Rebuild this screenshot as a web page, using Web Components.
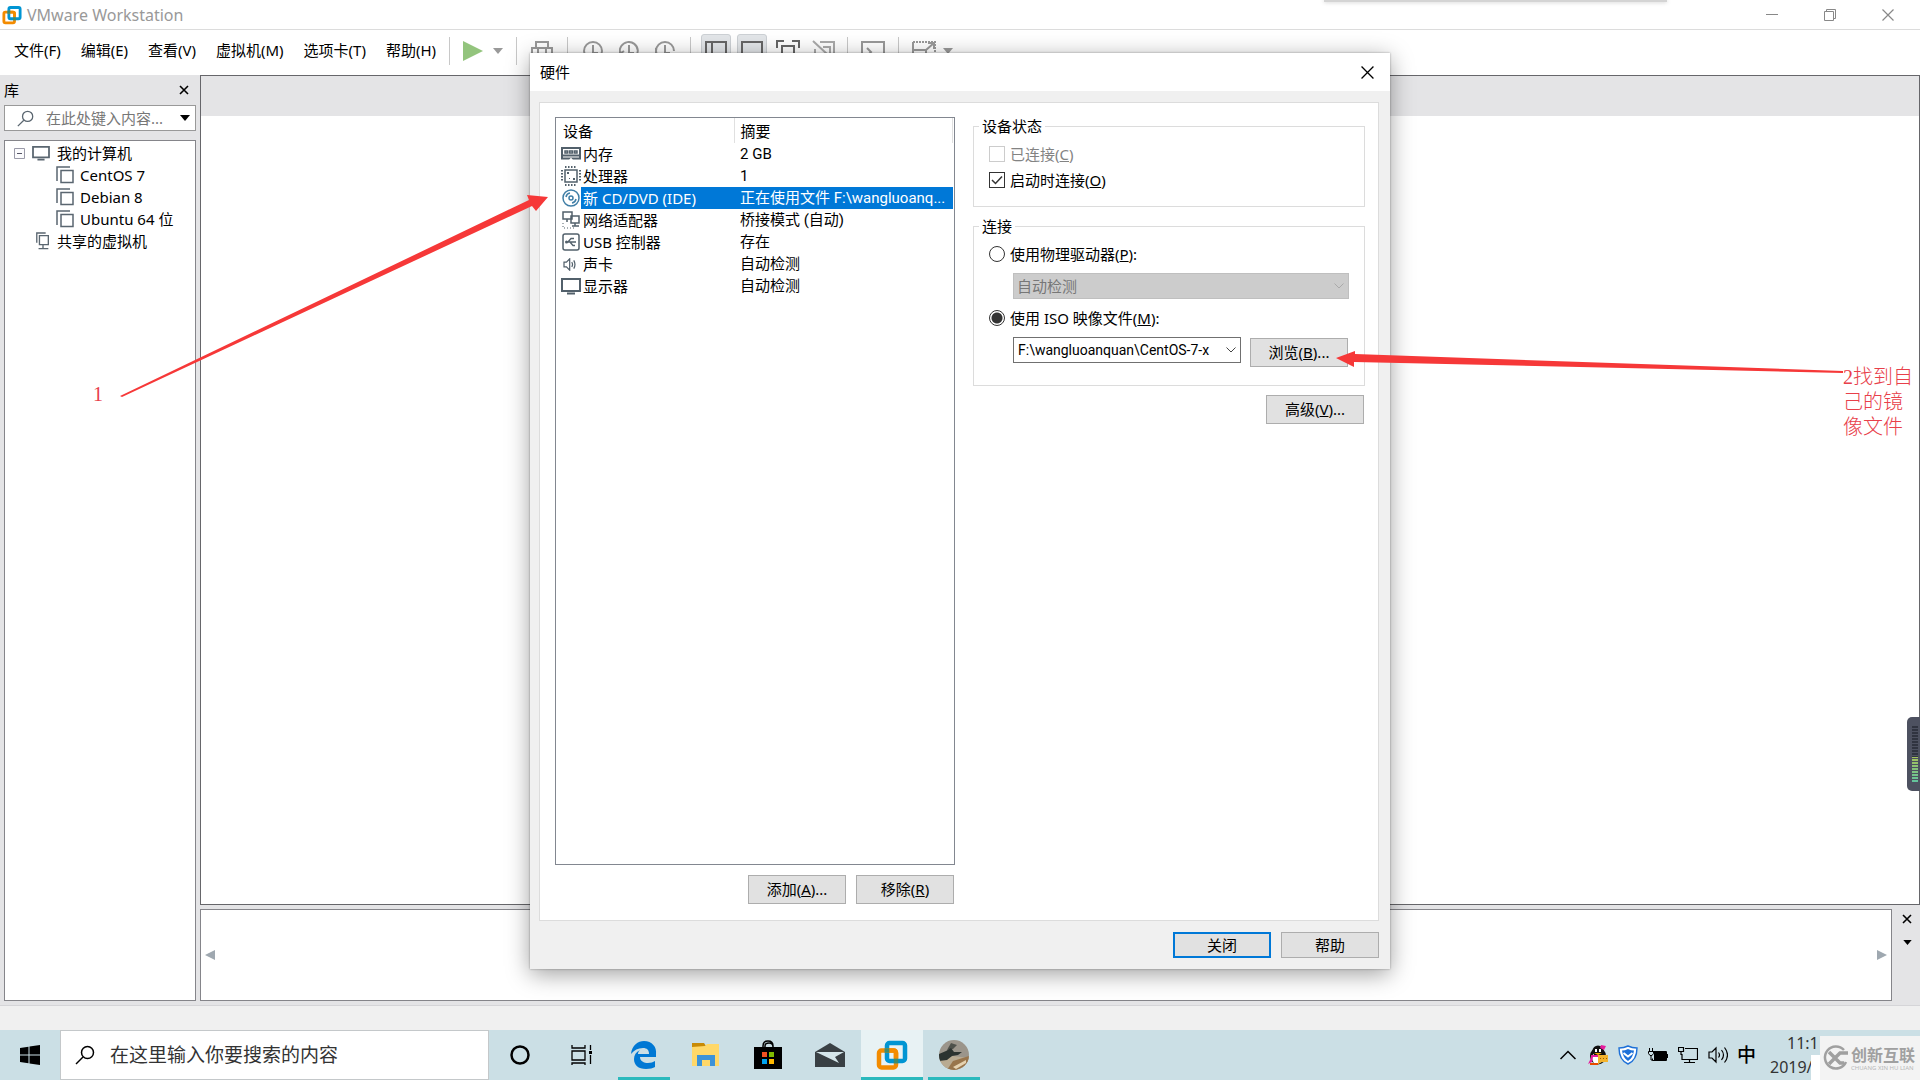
<!DOCTYPE html>
<html lang="zh-CN">
<head>
<meta charset="utf-8">
<title>VMware Workstation</title>
<style>
html,body{margin:0;height:100%;overflow:hidden}
body{font:15px/20px "Noto Sans","Noto Sans CJK SC",sans-serif;color:#000;background:#fff}
</style>
</head>
<body>
<vm-desktop></vm-desktop>
<script>
const define = (name, css, html, setup) => {
  const tpl = document.createElement('template');
  tpl.innerHTML = `<style>*{box-sizing:border-box}:host{box-sizing:border-box}button,input,select{font:inherit;color:inherit;margin:0;border-radius:0}${css}</style>${html}`;
  customElements.define(name, class extends HTMLElement {
    constructor() {
      super();
      this.attachShadow({mode: 'open'}).append(tpl.content.cloneNode(true));
    }
    connectedCallback() { if (setup) setup(this, this.shadowRoot); }
  });
};

/* name: [width, height, markup] */
const S = 'fill="none" stroke="currentColor"';
const ICONS = {
  vmware: [32, 32, `<g fill="none" stroke-width="4.500"><rect x="3" y="11.500" width="17" height="17" rx="2.500" stroke="#f38b00"/><rect x="11" y="4" width="18" height="18" rx="2.500" stroke="#0095d3"/><path d="M9 11.500h8.500q2.500 0 2.500 2.500v5.500" stroke="#f38b00"/><path d="M17.800 22h4.400" stroke="#3f8c6e"/><path d="M11 9.300v4.400" stroke="#3f8c6e"/></g>`],
  play: [20, 20, `<path d="M0 0L20 10L0 20z" fill="#93c47d"/>`],
  drop: [10, 6, `<path d="M0 0h10L5 6z" fill="currentColor"/>`],
  left: [10, 10, `<path d="M10 0v10L0 5z" fill="currentColor"/>`],
  right: [10, 10, `<path d="M0 0v10L10 5z" fill="currentColor"/>`],
  send: [22, 22, `<path ${S} stroke-width="2" d="M5 8V2h12v6M1 16V8h20v8zM7 8v6h8V8M5 16v5h12v-5"/>`],
  clock: [20, 20, `<circle ${S} stroke-width="2" cx="10" cy="10" r="9"/><path ${S} stroke-width="2" d="M10 4v8h5"/>`],
  clockback: [20, 20, `<path ${S} stroke-width="2" d="M1 12A9 9 0 1 1 10 19M10 4v8h5M0 9l2 3 3-2"/>`],
  clockcog: [20, 20, `<path ${S} stroke-width="2" d="M19 10A9 9 0 1 0 10 19M10 4v8h5M1 7l-1 6"/>`],
  pane: [22, 20, `<path ${S} stroke-width="2" d="M1 1h20v18H1zM7 1v18"/>`],
  single: [22, 20, `<path ${S} stroke-width="2" d="M1 1h20v18H1z"/>`],
  full: [24, 22, `<path ${S} stroke-width="2" d="M1 8V1h7M16 1h7v7M23 15v6h-7M8 21H1v-6M6 6h12v10H6z"/>`],
  unity: [24, 22, `<path ${S} stroke-width="2" d="M8 2h14v17H3V9M1 1l14 13M11 7h7v7"/>`],
  term: [24, 20, `<path ${S} stroke-width="2" d="M1 1h22v18H1zM6 7l4 4-4 4"/>`],
  stretch: [24, 20, `<path ${S} stroke-width="2" stroke-dasharray="2 1" d="M1 1h22v18"/><path ${S} stroke-width="2" d="M1 9h13v10H1zM1 1v8M14 9l8-7M16 2h6v6"/>`],
  search: [20, 20, `<circle ${S} stroke-width="1.500" cx="12.500" cy="7.500" r="6"/><path ${S} stroke-width="1.500" d="M8 12L1 19"/>`],
  close: [12, 12, `<path ${S} stroke-width="1.200" d="M.5.5l11 11M11.500.5l-11 11"/>`],
  closebold: [10, 10, `<path ${S} stroke-width="1.600" d="M1 1l8 8M9 1l-8 8"/>`],
  min: [12, 12, `<path ${S} d="M0 5.500h12"/>`],
  restore: [12, 12, `<path ${S} d="M.5 2.500h9v9h-9zM2.500 2.500v-2h9v9h-2"/>`],
  minus: [11, 11, `<path fill="#fbfbfd" stroke="#9a9aa8" d="M.5.5h10v10H.5z"/><path stroke="#556" d="M3 5.500h5"/>`],
  monitor: [20, 18, `<path ${S} stroke-width="2" d="M1 2h18v12H1zM6 16.500h8"/>`],
  vm: [18, 18, `<path ${S} stroke-width="1.500" d="M5 4.500h12v12H5zM1 15V1h13"/>`],
  shared: [18, 20, `<path ${S} stroke-width="1.500" d="M5 4h10v10H5zM2 12V1h10M9 14v4M4 18.500h11"/>`],
  memory: [20, 14, `<path ${S} stroke-width="2" d="M1 1h18v10.500H1zM1 8.500h18"/><path d="M4 4h2.500v2H4zM8.500 4h3v2h-3zM13.500 4H16v2h-2.500z" ${S} stroke-width="1.500"/><path fill="#fff" d="M8 13l2-2.500 2 2.500z"/>`],
  cpu: [20, 20, `<path ${S} stroke-width="1.500" d="M4 4h12v12H4z"/><path ${S} stroke-width="2" stroke-dasharray="1.500 1.500" d="M4 1h12M4 19h12M1 4v12M19 4v12"/><path fill="currentColor" d="M6 6h2v2H6zM12 12h2v2h-2zM8 12h1v1H8z"/>`],
  disc: [18, 18, `<circle cx="9" cy="9" r="8" fill="#fff" stroke="#3f7ea6" stroke-width="1.500"/><circle cx="9" cy="9" r="2" fill="none" stroke="#3f7ea6" stroke-width="1.500"/><path d="M4 8a5 5 0 0 1 4-4M14 10a5 5 0 0 1-4 4" fill="none" stroke="#3f7ea6" stroke-width="1.500"/>`],
  net: [20, 20, `<path ${S} stroke-width="1.500" d="M2 2h9v7H2zM10 6h8v7h-8zM14 13v3M11 16h7M6 9v3"/><path ${S} stroke-dasharray="1 2" d="M2 13v5h11"/>`],
  usb: [18, 18, `<rect ${S} stroke-width="1.500" x="1" y="1" width="16" height="16" rx="2"/><path ${S} stroke-width="1.300" d="M4 9h10M6 9l3-3.500h3M8 9l3 3.500h2"/><circle cx="4.500" cy="9" r="1.500" fill="currentColor"/>`],
  sound: [18, 16, `<path ${S} stroke-width="1.500" d="M1 5h3l4-4v14l-4-4H1zM10.500 5q2 3 0 6M13 3q3 5 0 10"/>`],
  check: [12, 10, `<path fill="none" stroke="#333" stroke-width="1.500" d="M1 5l3.500 3.500L11 1.500"/>`],
  chevron: [10, 6, `<path ${S} d="M.5.5L5 5 9.500.5"/>`],
  windows: [20, 20, `<path d="M0 3l8.500-1.200v7.700H0zM9.500 1.600L20 0v9.500H9.500zM0 10.500h8.500v7.700L0 17zM9.500 10.500H20V20L9.500 18.400z"/>`],
  cortana: [20, 20, `<circle cx="10" cy="10" r="8.500" fill="none" stroke="#000" stroke-width="2.500"/>`],
  tasks: [22, 20, `<path fill="none" stroke="#000" stroke-width="1.300" d="M1 0v3h13V0M1 6h13v9H1zM1 20v-2h13v2M19.500 0v5M19.500 10v9"/><path d="M18 6h3v3h-3z"/>`],
  edge: [26, 28, `<path fill="#0078d4" d="M0 13C1 4 7 0 13 0c8 0 13 6 12 13v3H9c0 4 4 6 8 6 3 0 5-1 7-2v6c-2 1-5 2-9 2C7 28 3 24 3 18c0-4 2-7 6-9-2 2-2 3-2 4h11c0-4-2-6-6-6C7 7 3 9 0 13z"/>`],
  folder: [28, 24, `<path fill="#c88a06" d="M0 0h12l2 3v4H0z"/><path fill="#ffd869" d="M0 4l13-1 2-2h12v22H0z"/><path fill="#3d93d8" d="M5 12h18v11h-5v-6h-8v6H5z"/>`],
  store: [30, 30, `<path d="M10 8V6q0-5 5-5t5 5v2M12 8V6q0-3 4-3t4 4" fill="none" stroke="#000" stroke-width="1.500"/><path d="M1 7h28v22H1z"/><path fill="#f25022" d="M9 12h5v5H9z"/><path fill="#7fba00" d="M16 12h5v5h-5z"/><path fill="#00a4ef" d="M9 19h5v5H9z"/><path fill="#ffb900" d="M16 19h5v5h-5z"/>`],
  mail: [30, 24, `<path fill="#394044" d="M0 9L15 0l15 9v15H0z"/><path fill="#d5e6ea" d="M1 9h28l-9 5 4 6L1 9z"/>`],
  photo: [30, 30, `<defs><clipPath id="c"><circle cx="15" cy="15" r="15"/></clipPath></defs><g clip-path="url(#c)"><path fill="#9b958b" d="M0 0h30v30H0z"/><path fill="#b9ab92" d="M0 30V20l14-4 16 2v12z"/><path fill="#98754c" d="M8 30l6-9 16-5v8l-12 6z"/><path fill="#4e514b" d="M12 3l6 2-4 4-6 1z"/><path fill="#2c3330" d="M0 14l7-3 5-3 3 4 8 0-4 3-6 1-5 4-8 1z"/><path fill="#e5d2b0" d="M14 27l13-7v3l-10 6z"/></g>`],
  up: [16, 10, `<path ${S} stroke-width="1.500" d="M.5 9L8 1.500 15.500 9"/>`],
  penguin: [20, 20, `<ellipse cx="10" cy="11" rx="8" ry="8.500" fill="#111"/><ellipse cx="9" cy="13" rx="5" ry="6" fill="#fff"/><circle cx="10" cy="6" r="5.500" fill="#111"/><path d="M7 4h2v3H7zM11 4h2v3h-2z" fill="#fff"/><path d="M6 8h8l-4 2z" fill="#f6a800"/><path fill="#e61b9d" d="M3 10h13v2H5l-1 5-4 2 3-6zM13 0l5 1-2 4-4-2z"/><path fill="#e84b00" d="M2 18h8v2H2z"/><path fill="#f3b32d" d="M10 10h10v7h-6l-4 2z"/><path fill="#9b5b00" d="M12 13h1v1h-1zM15 13h1v1h-1zM18 13h1v1h-1z"/>`],
  shield: [20, 20, `<path fill="#fff" stroke="#1d70d8" stroke-width="1.400" d="M10 1q4 2 9 2 0 12-9 16Q1 15 1 3q5 0 9-2z"/><path fill="#1d70d8" d="M10 4q3 1.500 6 1.500Q15 13 10 16 5 13 4 5.500 7 5.500 10 4z"/><path fill="none" stroke="#fff" stroke-width="2" d="M5.500 8l4.500 3.500L14.500 8"/>`],
  battery: [20, 14, `<path d="M6 4h12v9H6z"/><path fill="none" stroke="#000" d="M4.500 12.500v-2M5 3.500h13.500v9H4.500M19.500 6v4M1.500 0v3M4.500 0v3M.5 3.500h5v2l-1.500 2h-2L.5 5.500zM3 7v5h2"/>`],
  ethernet: [20, 18, `<path fill="none" stroke="#000" stroke-width="1.200" d="M7 2.500h12.500v11H4V8M6 16.500h11M11.500 14v3M.5 1.500h5v4h-5zM3 6v3"/>`],
  speaker: [20, 18, `<path fill="none" stroke="#000" stroke-width="1.200" d="M1 6h3l4-4v14l-4-4H1zM10.500 6.500q2 2.500 0 5M13.500 4q4 5 0 10M16.500 1.500q6 7.500 0 15"/>`],
  brand: [26, 26, `<path fill="none" stroke="#a0a0a0" stroke-width="2.500" d="M22 5A11 11 0 1 0 24 17"/><path fill="none" stroke="#a0a0a0" stroke-width="3.500" d="M7 7l6 6 5-5h8M7 19l6-6 5 5h4"/>`]
};
customElements.define('ui-icon', class extends HTMLElement {
  constructor() { super(); this.attachShadow({mode: 'open'}); }
  connectedCallback() {
    const [w, h, body] = ICONS[this.getAttribute('name')];
    const size = +this.getAttribute('width') || w;
    this.shadowRoot.innerHTML = `<style>:host{display:inline-flex;flex:none}svg{display:block}</style><svg width="${size}" height="${Math.round(h * size / w)}" viewBox="0 0 ${w} ${h}" aria-hidden="true">${body}</svg>`;
  }
});

define('ui-button', `
:host{display:block;width:98px;height:29px}
button{width:100%;height:100%;padding:0 0 2px;background:#e1e1e1;border:1px solid #adadad}
:host([short]){height:26px}
:host([short]) button{padding:0}
:host([primary]) button{border:2px solid #0078d7}`,
`<button type="button"><slot></slot></button>`);

define('ui-choice', `
:host{display:block}
label{display:flex;align-items:center;gap:5px;height:26px}
.box{display:grid;place-items:center;flex:none}
.box>*{grid-area:1/1}
input{appearance:none;width:16px;height:16px;border:1px solid #333;background:#fff}
input[type=radio]{border-radius:50%}
input[type=radio]:checked{background:radial-gradient(circle,#333 0 5px,#fff 6px)}
ui-icon{visibility:hidden;pointer-events:none}
input[type=checkbox]:checked+ui-icon{visibility:visible}
:host([disabled]) label{color:#838383}
:host([disabled]) input{border-color:#ccc}`,
`<label><span class="box"><input><ui-icon name="check"></ui-icon></span><span><slot></slot></span></label>`,
(el, root) => {
  const input = root.querySelector('input');
  input.type = el.getAttribute('type');
  input.checked = el.hasAttribute('checked');
  input.disabled = el.hasAttribute('disabled');
});

define('ui-combo', `
:host{display:grid;height:26px;align-items:center}
select,ui-icon{grid-area:1/1}
select{appearance:none;width:100%;height:100%;padding:0 20px 0 4px;border:1px solid #707070;background:#fff;line-height:20px;opacity:1}
:host([path]) select{font-family:Roboto,"Noto Sans CJK SC",sans-serif;font-size:14px}
ui-icon{justify-self:end;margin-right:5px;color:#444;pointer-events:none}
:host([disabled]) select{background:#ccc;border-color:#bfbfbf;color:#777;padding-left:3px}
:host([disabled]) ui-icon{color:#aaa}`,
`<select><option></option></select><ui-icon name="chevron"></ui-icon>`,
(el, root) => {
  const select = root.querySelector('select');
  select.setAttribute('aria-label', el.getAttribute('label'));
  select.options[0].textContent = el.getAttribute('value');
  select.disabled = el.hasAttribute('disabled');
});

define('ui-group', `
:host{display:block}
fieldset{margin:0;min-width:0;border:1px solid #dcdcdc;padding:5px 15px 13px}
legend{height:20px;padding:0 3px;margin-left:-10px}
:host([wide]) fieldset{padding-bottom:18px}`,
`<fieldset><legend></legend><slot></slot></fieldset>`,
(el, root) => { root.querySelector('legend').textContent = el.getAttribute('label'); });

define('vm-titlebar', `
:host{display:flex;align-items:center;height:30px;border-bottom:1px solid #dcdcdc;padding:0 26px 0 2px;color:#999}
h1{flex:1;margin:0 0 0 5px;font-size:16px;font-weight:400;line-height:20px}
nav{display:flex;gap:46px}
button{display:flex;border:0;background:none;padding:0;color:#888}`,
`<ui-icon name="vmware" width="20"></ui-icon><h1>VMware Workstation</h1>
<nav><button aria-label="最小化"><ui-icon name="min"></ui-icon></button><button aria-label="还原"><ui-icon name="restore"></ui-icon></button><button aria-label="关闭"><ui-icon name="close"></ui-icon></button></nav>`);

define('vm-menubar', `
:host{display:flex;align-items:center;height:45px;padding:0 0 4px 14px;color:#000}
nav{display:flex;justify-content:space-between;width:422px;margin-right:13px;flex:none;padding-bottom:2px}
button{border:0;background:none;padding:0;white-space:nowrap;display:flex}
.tools{display:flex;align-items:center;color:#999}
hr{width:1px;height:28px;margin:0;border:0;background:#c8c8c8}
.group{display:flex;align-items:center;padding:0 13px;gap:10px}
.group.send{padding:0 14px}
.group.history{gap:16px;padding:0 15px}
.group.views{gap:6px;padding:0 8px 0 10px;color:#666}
.group.views button{width:30px;height:34px;align-items:center;justify-content:center;border-radius:3px}
.group.views .on{background:#e3e6e9;border:1px solid #ccd0d4}
.group.views .dim{color:#aaa}
.group.stretch{gap:7px}`,
`<nav><button>文件(F)</button><button>编辑(E)</button><button>查看(V)</button><button>虚拟机(M)</button><button>选项卡(T)</button><button>帮助(H)</button></nav>
<div class="tools"><hr><div class="group"><button aria-label="开机"><ui-icon name="play"></ui-icon></button><button aria-label="电源选项"><ui-icon name="drop"></ui-icon></button></div>
<hr><div class="group send"><button aria-label="发送"><ui-icon name="send"></ui-icon></button></div>
<hr><div class="group history"><button aria-label="快照"><ui-icon name="clock"></ui-icon></button><button aria-label="恢复快照"><ui-icon name="clockback"></ui-icon></button><button aria-label="管理快照"><ui-icon name="clockcog"></ui-icon></button></div>
<hr><div class="group views"><button class="on" aria-label="库"><ui-icon name="pane"></ui-icon></button><button class="on" aria-label="单一视图"><ui-icon name="single"></ui-icon></button><button aria-label="全屏"><ui-icon name="full"></ui-icon></button><button class="dim" aria-label="Unity"><ui-icon name="unity"></ui-icon></button></div>
<hr><div class="group"><button aria-label="控制台"><ui-icon name="term"></ui-icon></button></div>
<hr><div class="group stretch"><button aria-label="拉伸"><ui-icon name="stretch"></ui-icon></button><button aria-label="拉伸选项"><ui-icon name="drop"></ui-icon></button></div></div>`);

define('vm-library', `
:host{display:flex;flex-direction:column;width:200px;flex:none;padding:0 4px 4px;background:#e4e4e6}
header{display:flex;align-items:center;justify-content:space-between;height:30px;padding-right:7px}
h2{font-size:15px;font-weight:400;margin:0}
button{display:flex;border:0;padding:0;background:none}
.search{display:flex;align-items:center;gap:12px;height:26px;border:1px solid #999;background:#fff;padding:0 5px 0 12px;color:#555}
.search input{border:0;outline:0;padding:0;flex:1;min-width:0;background:none}
.search input::placeholder{color:#777;opacity:1}
.search button{color:#000}
.tree{flex:1;margin:9px 0 0;border:1px solid #85858a;background:#fff;padding:1px 0 0 9px}
ul{list-style:none;margin:0;padding:0}
li>span{display:flex;align-items:center;height:22px;gap:6px}
ui-icon{color:#5a6670}
li>span>ui-icon:first-child:not([name=minus]){margin-left:21px}
li li>span>ui-icon:first-child:not([name=minus]){margin-left:42px}
.root{gap:7px}`,
`<header><h2>库</h2><button aria-label="关闭库"><ui-icon name="closebold" style="color:#000"></ui-icon></button></header>
<div class="search"><ui-icon name="search" width="17"></ui-icon><input aria-label="搜索" placeholder="在此处键入内容..."><button aria-label="搜索选项"><ui-icon name="drop" style="color:#000"></ui-icon></button></div>
<div class="tree"><ul><li><span class="root"><ui-icon name="minus"></ui-icon><ui-icon name="monitor" width="18"></ui-icon>我的计算机</span>
<ul><li><span><ui-icon name="vm"></ui-icon>CentOS 7</span></li><li><span><ui-icon name="vm"></ui-icon>Debian 8</span></li><li><span><ui-icon name="vm"></ui-icon>Ubuntu 64 位</span></li></ul></li>
<li><span><ui-icon name="shared" width="16"></ui-icon>共享的虚拟机</span></li></ul></div>`);

define('vm-workspace', `
:host{display:flex;flex-direction:column;flex:1;min-width:0;background:#e4e4e6;padding-bottom:4px}
.view{flex:1;border:1px solid #66666a;background:#fff}
.tabs{height:40px;background:#e4e4e6}
.log{display:flex;height:92px;margin-top:4px}
.strip{flex:1;display:flex;align-items:center;justify-content:space-between;border:1px solid #85858a;background:#fff;padding:0 4px;color:#9fa8b0}
.side{width:28px;display:flex;flex-direction:column;align-items:center;padding:5px 0 0 2px;gap:16px}
button{display:flex;border:0;padding:0;background:none}`,
`<div class="view"><div class="tabs"></div></div>
<div class="log"><div class="strip"><button aria-label="向左"><ui-icon name="left"></ui-icon></button><button aria-label="向右"><ui-icon name="right"></ui-icon></button></div>
<div class="side"><button aria-label="关闭"><ui-icon name="closebold"></ui-icon></button><button aria-label="选项"><ui-icon name="drop" width="9"></ui-icon></button></div></div>`);

define('device-list', `
:host{display:block;border:1px solid #828790;background:#fff;padding:0 1px 0 0}
table{width:100%;border-collapse:collapse;table-layout:fixed}
td,th{padding:0;font-weight:400;text-align:left;white-space:nowrap;line-height:20px}
th{height:25px;padding:0 7px}
th+th{border-left:1px solid #e0e0e0;border-right:1px solid #e0e0e0;padding:0 6px}
td{height:22px}
td:nth-child(2){padding-left:2px}
td:nth-child(3){padding-left:6px;font-family:Roboto,"Noto Sans CJK SC",sans-serif}
td:first-child{text-align:center;line-height:0;color:#52606b;padding-left:4px}
td ui-icon{vertical-align:middle}
.sel td+td{background:#0078d7;color:#fff}`,
`<table><colgroup><col style="width:25px"><col style="width:153px"><col></colgroup>
<thead><tr><th colspan="2">设备</th><th>摘要</th></tr></thead><tbody>
<tr><td><ui-icon name="memory"></ui-icon></td><td>内存</td><td>2 GB</td></tr>
<tr><td><ui-icon name="cpu"></ui-icon></td><td>处理器</td><td>1</td></tr>
<tr class="sel"><td><ui-icon name="disc"></ui-icon></td><td>新 CD/DVD (IDE)</td><td>正在使用文件 F:\\wangluoanq...</td></tr>
<tr><td><ui-icon name="net"></ui-icon></td><td>网络适配器</td><td>桥接模式 (自动)</td></tr>
<tr><td><ui-icon name="usb"></ui-icon></td><td>USB 控制器</td><td>存在</td></tr>
<tr><td><ui-icon name="sound" width="15"></ui-icon></td><td>声卡</td><td>自动检测</td></tr>
<tr><td><ui-icon name="monitor"></ui-icon></td><td>显示器</td><td>自动检测</td></tr></tbody></table>`);

define('hardware-dialog', `
:host{display:flex;flex-direction:column;background:#f0f0f0;box-shadow:0 0 2px rgba(0,0,0,.35),0 5px 22px rgba(0,0,0,.38)}
header{display:flex;align-items:center;justify-content:space-between;height:38px;padding:0 16px 0 10px;background:#fff}
h2{margin:0;font-size:15px;font-weight:400}
header button{display:flex;border:0;padding:0;background:none}
main{flex:1;display:flex;gap:18px;margin:11px 11px 0 9px;border:1px solid #dcdcdc;background:#fff;padding:13px 13px 15px 15px}
.devices{flex:400;display:flex;flex-direction:column;gap:10px;padding:1px 0}
device-list{flex:1}
.row{display:flex;justify-content:flex-end;gap:10px;padding-right:1px}
.settings{flex:392;display:flex;flex-direction:column;gap:9px}
.stack{display:flex;flex-direction:column;gap:6px}
.stack ui-combo{margin-left:24px}
.iso{display:flex;gap:9px;height:30px;margin-right:1px}
.iso ui-combo{flex:1}
.iso ui-button{align-self:flex-end}
footer{display:flex;justify-content:flex-end;gap:10px;padding:11px 11px}`,
`<header><h2>硬件</h2><button aria-label="关闭窗口"><ui-icon name="close" width="13"></ui-icon></button></header>
<main><section class="devices"><device-list></device-list><div class="row"><ui-button>添加(<u>A</u>)...</ui-button><ui-button>移除(<u>R</u>)</ui-button></div></section>
<section class="settings"><ui-group label="设备状态"><ui-choice type="checkbox" disabled>已连接(<u>C</u>)</ui-choice><ui-choice type="checkbox" checked>启动时连接(<u>O</u>)</ui-choice></ui-group>
<ui-group label="连接" wide><div class="stack"><ui-choice type="radio">使用物理驱动器(<u>P</u>):</ui-choice><ui-combo disabled label="物理驱动器" value="自动检测"></ui-combo>
<ui-choice type="radio" checked>使用 ISO 映像文件(<u>M</u>):</ui-choice><div class="iso"><ui-combo path label="ISO 映像文件" value="F:\\wangluoanquan\\CentOS-7-x"></ui-combo><ui-button>浏览(<u>B</u>)...</ui-button></div></div></ui-group>
<div class="row"><ui-button>高级(<u>V</u>)...</ui-button></div></section></main>
<footer><ui-button short primary>关闭</ui-button><ui-button short>帮助</ui-button></footer>`);

define('task-button', `
:host{display:block;width:62px;height:50px}
button{width:100%;height:100%;padding:0;border:0;background:none;display:flex;align-items:center;justify-content:center}
:host([running]) button{background:linear-gradient(#2bb9bd,#2bb9bd) center bottom/52px 3px no-repeat}
:host([active]) button{background:linear-gradient(#2bb9bd,#2bb9bd) center bottom/100% 3px no-repeat #e8f2f4}`,
`<button><slot></slot></button>`,
(el, root) => root.querySelector('button').setAttribute('aria-label', el.getAttribute('label')));

define('task-bar', `
:host{display:flex;height:50px;background:#cbdfe5}
.start{width:60px}
.search{display:flex;align-items:center;gap:15px;width:429px;border:1px solid #c4c8ca;background:#fff;padding-left:14px}
.search input{flex:1;border:0;outline:0;padding:0;font-size:19px;line-height:28px;background:none}
.search input::placeholder{color:#333;opacity:1}
.tray{display:flex;align-items:center;margin-left:auto}
.tray button{display:flex;width:30px;height:50px;align-items:center;justify-content:center;border:0;padding:0;background:none}
.tray .ime{width:27px;font-size:19px;font-weight:500}
time{display:flex;flex-direction:column;width:160px;padding-left:10px;font-size:16px;line-height:24px;color:#333}
time span:first-child{padding-left:17px}`,
`<task-button class="start" label="开始"><ui-icon name="windows"></ui-icon></task-button>
<div class="search"><ui-icon name="search" width="20"></ui-icon><input aria-label="搜索" placeholder="在这里输入你要搜索的内容"></div>
<task-button label="Cortana"><ui-icon name="cortana"></ui-icon></task-button><task-button label="任务视图"><ui-icon name="tasks"></ui-icon></task-button>
<task-button running label="Edge"><ui-icon name="edge"></ui-icon></task-button><task-button label="文件资源管理器"><ui-icon name="folder"></ui-icon></task-button>
<task-button label="商店"><ui-icon name="store"></ui-icon></task-button><task-button label="邮件"><ui-icon name="mail"></ui-icon></task-button>
<task-button active label="VMware"><ui-icon name="vmware"></ui-icon></task-button><task-button running label="图片"><ui-icon name="photo"></ui-icon></task-button>
<div class="tray"><button aria-label="显示隐藏的图标"><ui-icon name="up"></ui-icon></button><button aria-label="QQ"><ui-icon name="penguin"></ui-icon></button><button aria-label="安全"><ui-icon name="shield"></ui-icon></button><button aria-label="电池"><ui-icon name="battery"></ui-icon></button><button aria-label="网络"><ui-icon name="ethernet"></ui-icon></button><button aria-label="音量"><ui-icon name="speaker"></ui-icon></button><button class="ime">中</button><time><span>11:1</span><span>2019/</span></time></div>`);

define('brand-mark', `
:host{display:flex;align-items:center;gap:3px;width:109px;height:44px;padding:0 0 0 11px;background:linear-gradient(#f3f3f3,#f3f3f3) right top/100px 100% no-repeat,linear-gradient(#fff,#fff) left bottom/10px 25px no-repeat;color:#a0a0a0}
div{display:flex;flex-direction:column}
b{font-size:16px;line-height:20px}
small{font-size:6px;line-height:6px;white-space:nowrap;color:#b8b8b8}`,
`<ui-icon name="brand" width="26"></ui-icon><div><b>创新互联</b><small>CHUANG XIN HU LIAN</small></div>`);

define('level-meter', `
:host{display:flex;justify-content:center;width:13px;height:74px;padding:8px 2px 8px 4px;border-radius:5px 0 0 5px;background:#4d5160}
i{width:6px;background:repeating-linear-gradient(#4d5160 0 1px,transparent 1px 3px),linear-gradient(#303440 0 55%,#a5c45a 55%,#5fc3a0)}`,
`<i></i>`);

define('note-layer', `
:host{display:block;pointer-events:none;color:#e8404a;font:20px/25px "Liberation Serif","Noto Sans CJK SC",serif}
svg{display:block;width:100%;height:100%}
p{position:absolute;margin:0;font-weight:300}
.one{left:93px;top:382px}
.two{right:4px;top:365px;width:73px}`,
`<svg viewBox="0 0 1920 1080" preserveAspectRatio="none" fill="#f63838"><path d="M120 396L529 200L527 195L548 197L536 211L532 206L122 397z"/><path d="M1843 371L1355 354L1355 351L1336 358L1354 367L1354 362L1843 373z"/></svg>
<p class="one">1</p><p class="two">2找到自<br>己的镜<br>像文件</p>`);

define('vm-desktop', `
:host{display:flex;flex-direction:column;height:100vh;position:relative;background:#fff}
.body{flex:1;display:flex;min-height:0}
.status{height:25px;background:#f0f0f0;border-top:1px solid #d5d5d8}
.peek{position:absolute;top:0;right:253px;width:343px;height:2px;background:#d4d4d4;box-shadow:0 0 4px #bbb}
hardware-dialog{position:absolute;top:53px;bottom:111px;left:0;right:0;margin:0 auto;width:860px}
level-meter{position:absolute;right:0;top:717px}
note-layer{position:absolute;inset:0}
brand-mark{position:absolute;right:0;bottom:0}`,
`<vm-titlebar></vm-titlebar><vm-menubar></vm-menubar><div class="body"><vm-library></vm-library><vm-workspace></vm-workspace></div><div class="status"></div><task-bar></task-bar>
<div class="peek"></div><level-meter></level-meter><hardware-dialog role="dialog" aria-label="硬件"></hardware-dialog><brand-mark></brand-mark><note-layer></note-layer>`);
</script>
</body>
</html>
